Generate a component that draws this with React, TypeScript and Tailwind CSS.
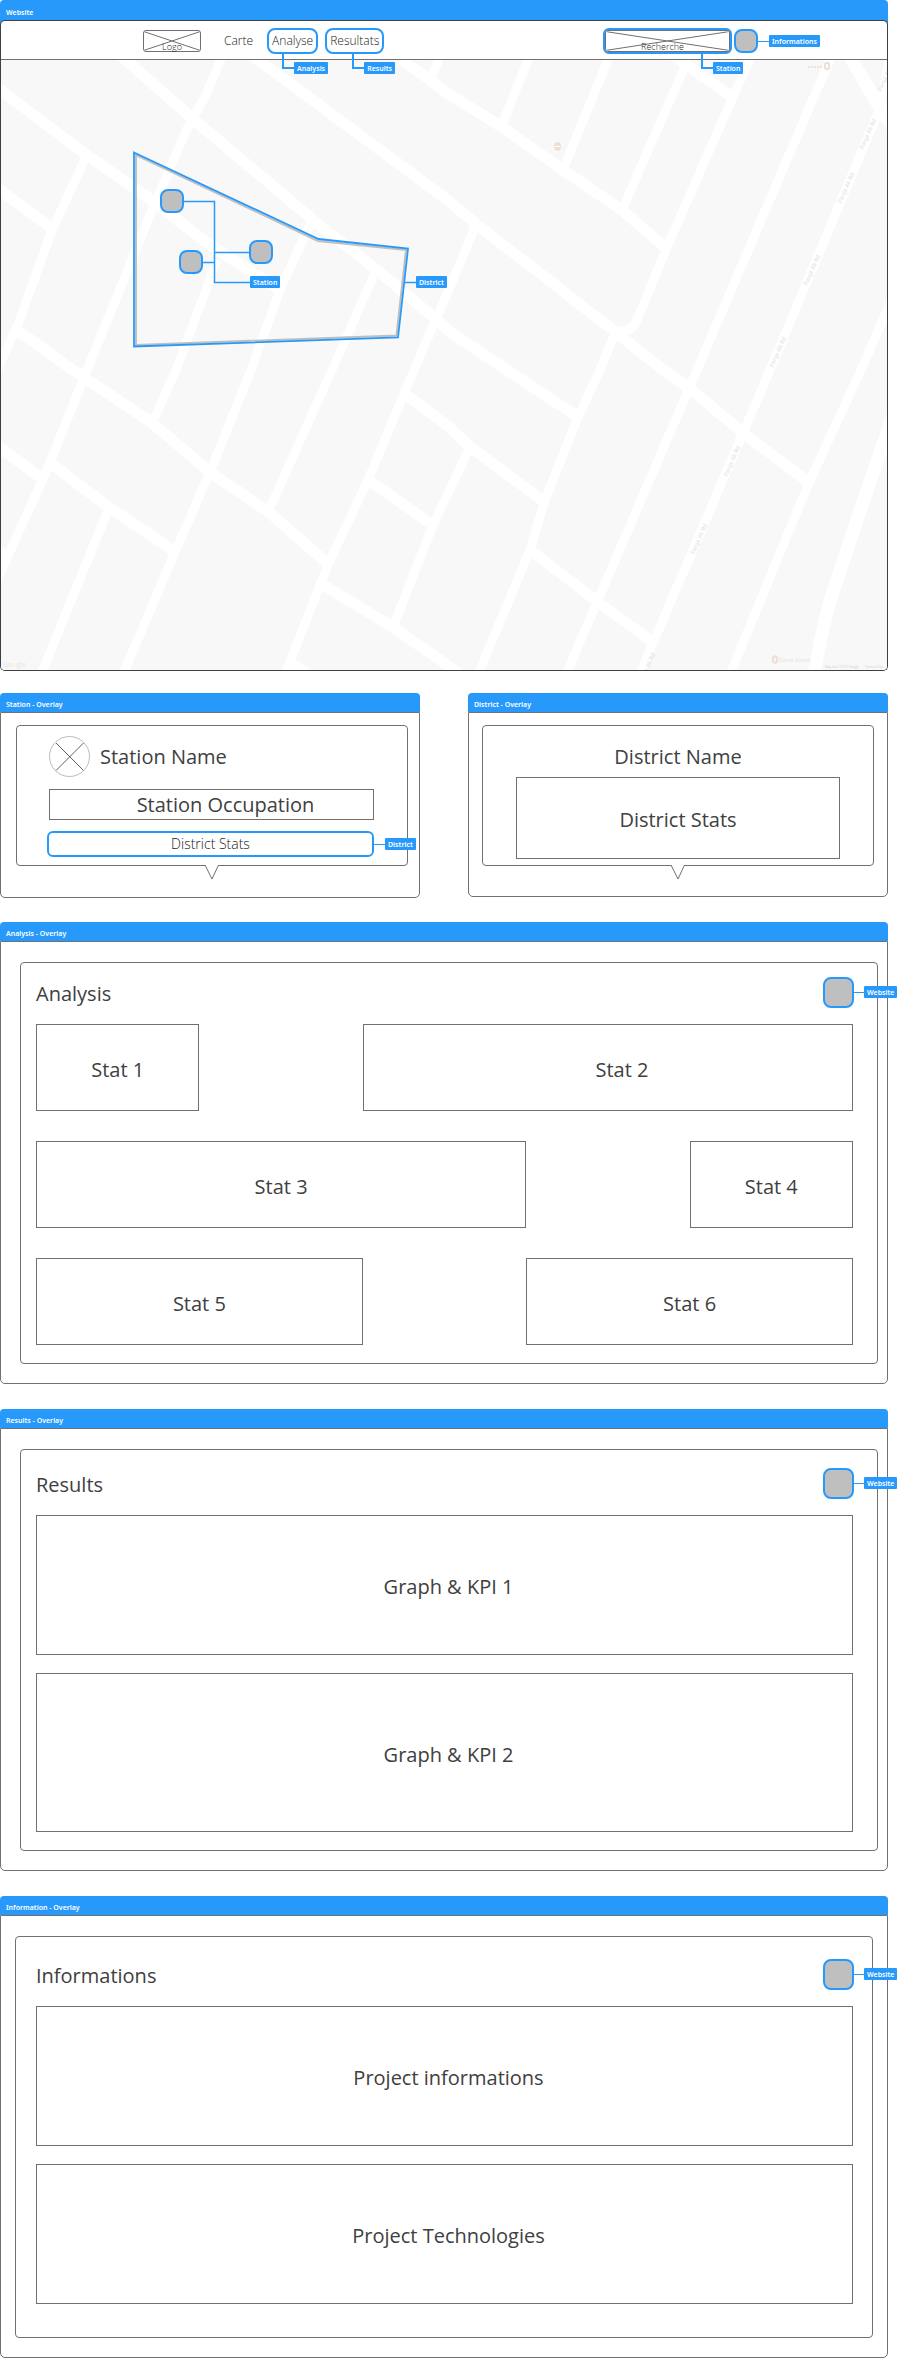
import type { ReactNode } from "react";

const AVENUES: string[] = [
  "M-6 85 L87 155 L147 197 L213 247 L281 291",
  "M112 50 L126 60 L192 118 L313 220 L377 270 L437 320 L450 332 L507 370 L578 417",
  "M244 50 L290 83 L450 202 L475 223 L613 330 L663 370 L688 387 L743 433 L810 483",
  "M388 50 L430 80 L450 95 L502 127 L563 170 L622 210 L666 248",
  "M666 50 L683 62 L733 98",
  "M-6 186 L52 228",
  "M17 330 L70 368 L152 423 L210 472 L270 513 L327 563",
  "M323 585 L393 627 L450 667 L460 674",
  "M-6 443 L40 477",
  "M53 465 L110 508 L176 552",
  "M407 395 L450 428 L470 447 L545 502",
  "M370 481 L434 526",
  "M530 550 L598 602 L654 643",
  "M288 661 L312 677",
  "M-4 549 L5 556",
];

const STREETS: string[] = [
  "M225 50 L205 97 L190 122 L155 203 L87 370 L47 470 L-4 582",
  "M86 157 L52 230 L17 327 L-4 372",
  "M217 260 L176 370 L152 423",
  "M311 222 L280 290 L251 370 L210 472 L175 552 L124 672",
  "M375 273 L332 370 L268 512",
  "M475 227 L450 287 L414 370 L368 480 L327 567 L286 672",
  "M532 50 L502 125",
  "M443 50 L430 80",
  "M612 50 L563 170",
  "M686 64 L622 210",
  "M754 50 L733 97 L667 247 L637 320 Q633 332 618 332 L612 340 L600 370 L578 417 L545 500 L530 550 L479 672",
  "M834 50 L697 370 L598 600 L567 672",
  "M891 50 L880 108 L770 370 L743 433 L653 643 L641 672",
  "M896 290 L861 370 L808 485 L731 672",
  "M109 508 L42 672",
  "M470 447 L433 525 L393 627",
];

const WIDE_ROADS: string[] = [
  "M846 50 L880 108 L898 134",
  "M893 416 L862 505 L833 592 Q827 606 814 674",
];

const STREET_LABELS: [number, number][] = [
  [868, 134],
  [846, 188],
  [812, 270],
  [778, 352],
  [886, 76],
  [732, 461],
  [699, 539],
  [647, 668],
];

function Tag({ children }: { children: ReactNode }) {
  return (
    <span className="flex h-3 items-center rounded-[1px] bg-[#2699fb] px-[3px] font-['Noto_Sans','Open_Sans',sans-serif] text-[7px] leading-none font-semibold whitespace-nowrap text-white">
      {children}
    </span>
  );
}

/* Elbow connector that hangs below a navigation item. */
function DropLink({ children }: { children: ReactNode }) {
  return (
    <span className="flex">
      <span className="h-[15px] w-3 border-b-2 border-l-2 border-[#2699fb]" />
      <span className="mt-2">
        <Tag>{children}</Tag>
      </span>
    </span>
  );
}

function SideLink({ children }: { children: ReactNode }) {
  return (
    <span className="flex items-center">
      <span className="h-px w-[11px] bg-[#2699fb]" />
      <Tag>{children}</Tag>
    </span>
  );
}

function Cross() {
  return (
    <svg
      className="pointer-events-none absolute inset-0 h-full w-full"
      viewBox="0 0 100 100"
      preserveAspectRatio="none"
      aria-hidden="true"
    >
      <path
        d="M1 4 L99 96 M1 96 L99 4"
        stroke="#707070"
        strokeWidth="1"
        vectorEffect="non-scaling-stroke"
      />
    </svg>
  );
}

function Frame({
  title,
  children,
  className = "",
}: {
  title: string;
  children: ReactNode;
  className?: string;
}) {
  return (
    <section className={`flex flex-col ${className}`}>
      <h2 className="flex h-[19px] items-center rounded-t-[4px] bg-[#2699fb] px-[6px] pt-1 font-['Noto_Sans','Open_Sans',sans-serif] text-[7px] leading-none font-semibold text-white">
        {title}
      </h2>
      <div className="flex-1 rounded-b-[5px] border border-[#707070]">
        {children}
      </div>
    </section>
  );
}

function Box({
  children,
  className,
}: {
  children: ReactNode;
  className: string;
}) {
  return (
    <div
      className={`flex items-center justify-center border border-[#707070] pt-1 text-xl leading-6 ${className}`}
    >
      {children}
    </div>
  );
}

function CardTitle({ children }: { children: string }) {
  return (
    <div className="flex items-center justify-between">
      <h3 className="pt-[2px] text-xl leading-6">{children}</h3>
      <div className="relative">
        <button
          type="button"
          aria-label={`Close ${children}`}
          className="-mr-px block size-[31px] rounded-lg border-2 border-[#2699fb] bg-[#bfbfbf]"
        />
        <span className="absolute top-[9px] left-full">
          <SideLink>Website</SideLink>
        </span>
      </div>
    </div>
  );
}

function Pointer() {
  return (
    <svg
      className="absolute top-full left-1/2 -ml-2 h-[15px] w-4"
      viewBox="0 0 16 15"
      aria-hidden="true"
    >
      <path d="M0.5 -1 L8 14 L15 -1" fill="#fff" stroke="#707070" />
      <path d="M1 -1 H14.6 V0 H1 Z" fill="#fff" />
    </svg>
  );
}

function Pin({ className, label }: { className: string; label: string }) {
  return (
    <button
      type="button"
      aria-label={label}
      className={`absolute size-6 rounded-lg border-2 border-[#2699fb] bg-[#bfbfbf] ${className}`}
    />
  );
}

function CityMap() {
  return (
    <div className="relative overflow-hidden rounded-b-[4px]">
      <svg
        className="block h-[610px] w-full"
        viewBox="1 60 886 610"
        preserveAspectRatio="xMinYMin slice"
        role="img"
        aria-label="Carte"
      >
        <rect x="0" y="50" width="900" height="630" fill="#f8f8f8" />
        <g fill="none" stroke="#fff" strokeWidth="11">
          {AVENUES.map((d) => (
            <path key={d} d={d} />
          ))}
        </g>
        <g fill="none" stroke="#fff" strokeWidth="9">
          {STREETS.map((d) => (
            <path key={d} d={d} />
          ))}
        </g>
        <g fill="none" stroke="#fff" strokeWidth="13">
          {WIDE_ROADS.map((d) => (
            <path key={d} d={d} />
          ))}
        </g>
        <g fill="#dedede" fontSize="6" textAnchor="middle">
          {STREET_LABELS.map(([x, y]) => (
            <text key={x} x={x} y={y} dy="2" transform={`rotate(-66 ${x} ${y})`}>
              Panja Ali Rd
            </text>
          ))}
        </g>
        <g fill="none" stroke="#ecdfd8" strokeWidth="2">
          <ellipse cx="827" cy="66" rx="2.2" ry="3.2" />
          <ellipse cx="775" cy="659.5" rx="2.2" ry="3.2" />
        </g>
        <ellipse cx="557.5" cy="146.5" rx="3.4" ry="4.4" fill="#ecdfd8" />
        <path d="M555 146.500 h5" stroke="#fff" />
        <path d="M808 67 h15" stroke="#e9e2de" strokeWidth="2" strokeDasharray="2 1" />
        <text x="779" y="662" fontSize="5" fill="#eae0da">
          Dance School
        </text>
        <text x="825" y="668" fontSize="3" fill="#cfcfcf">
          Map data ©2017 Google
        </text>
        <text x="865" y="668" fontSize="3" fill="#cfcfcf">
          Terms of Use
        </text>
        <text x="3" y="667" fontSize="7">
          <tspan fill="#d9e6fb">G</tspan>
          <tspan fill="#fbdcd9">o</tspan>
          <tspan fill="#fdf0cf">o</tspan>
          <tspan fill="#d9e6fb">g</tspan>
          <tspan fill="#d8f0df">l</tspan>
          <tspan fill="#fbdcd9">e</tspan>
        </text>
        <path
          d="M136 155 L318 241 L406 250 L396.500 335.500 L136 345 Z"
          fill="none"
          stroke="#bfbfbf"
          strokeWidth="2"
        />
        <path
          d="M134 152.500 L318.500 239 L408 248.500 L398 337.500 L134 346.500 Z"
          fill="none"
          stroke="#2699fb"
          strokeWidth="1.800"
        />
        <path
          d="M184 201.500 H214.500 V282.500 H250 M203 262.500 H214.500 M214.500 252.500 H249 M405 282.500 H416"
          fill="none"
          stroke="#2699fb"
          strokeWidth="1.500"
        />
      </svg>
      <Pin className="top-[129px] left-[159px]" label="Station 1" />
      <Pin className="top-[180px] left-[248px]" label="Station 2" />
      <Pin className="top-[190px] left-[178px]" label="Station 3" />
      <span className="absolute top-[216px] left-[249px]">
        <Tag>Station</Tag>
      </span>
      <span className="absolute top-[216px] left-[415px]">
        <Tag>District</Tag>
      </span>
    </div>
  );
}

function Website() {
  return (
    <section>
      <div className="rounded-t-[4px] bg-[#2699fb]">
        <h1 className="flex h-5 items-center px-[6px] pt-1 font-['Noto_Sans','Open_Sans',sans-serif] text-[7px] leading-none font-semibold text-white">
          Website
        </h1>
        <div className="rounded-t-[5px] border border-b-0 border-[#404040] bg-white">
          <header className="flex h-[39px] items-center border-b border-[#707070] pt-[2px] pr-[129px] pl-[142px] text-[#202020]">
            <div className="relative h-[22px] w-[58px] rounded-[3px] border border-[#707070] pt-[11px] text-center text-[9px] leading-[10px] font-light">
              <Cross />
              <span className="relative">Logo</span>
            </div>
            <nav className="ml-4 flex items-center gap-[7px] text-xs font-light">
              <a href="#carte" className="px-[7px] leading-4">
                Carte
              </a>
              <div className="relative">
                <a
                  href="#analysis"
                  className="flex h-[26px] items-center rounded-lg border-2 border-[#2699fb] px-[3px]"
                >
                  Analyse
                </a>
                <span className="absolute top-full left-[15px] z-10">
                  <DropLink>Analysis</DropLink>
                </span>
              </div>
              <div className="relative">
                <a
                  href="#results"
                  className="flex h-[26px] items-center rounded-lg border-2 border-[#2699fb] px-[3px]"
                >
                  Resultats
                </a>
                <span className="absolute top-full left-[27px] z-10">
                  <DropLink>Results</DropLink>
                </span>
              </div>
            </nav>
            <div className="ml-auto flex items-center gap-[2px]">
              <div className="relative rounded-md border-2 border-[#2699fb]">
                <div className="relative h-[22px] w-[125px] rounded-[3px] border border-[#707070]">
                  <Cross />
                  <input
                    type="search"
                    aria-label="Recherche"
                    placeholder="Recherche"
                    className="relative block h-full w-full bg-transparent pt-[10px] text-center text-[9px] leading-[10px] font-light outline-none placeholder:text-[#202020]"
                  />
                </div>
                <span className="absolute top-full left-24 z-10 mt-[2px]">
                  <DropLink>Station</DropLink>
                </span>
              </div>
              <div className="relative">
                <button
                  type="button"
                  aria-label="Informations"
                  className="block size-6 rounded-lg border-2 border-[#2699fb] bg-[#bfbfbf]"
                />
                <span className="absolute top-[6px] left-full">
                  <SideLink>Informations</SideLink>
                </span>
              </div>
            </div>
          </header>
        </div>
      </div>
      <div className="rounded-b-[5px] border border-t-0 border-[#404040]">
        <CityMap />
      </div>
    </section>
  );
}

export default function App() {
  return (
    <main className="bg-white pr-3 font-['Open_Sans','Noto_Sans',sans-serif] text-[#404040]">
      <Website />

      <div className="mt-[22px] grid grid-cols-2 gap-12">
        <Frame title="Station - Overlay" className="h-[205px]">
          <div className="relative mt-3 mr-[11px] ml-[15px] h-[141px] rounded-[4px] border border-[#707070] pr-[33px] pl-8">
            <div className="flex items-center gap-[10px] pt-[10px]">
              <svg className="size-[41px]" viewBox="0 0 41 41" fill="none" aria-hidden="true">
                <circle cx="20.5" cy="20.5" r="20" stroke="#bbb" />
                <path d="M7 7 L34.500 34.500 M34.500 7 L7 34.500" stroke="#606060" />
              </svg>
              <h3 className="text-xl leading-6">Station Name</h3>
            </div>
            <Box className="mt-3 h-[31px] pb-1 pl-7">Station Occupation</Box>
            <div className="relative mt-[11px] -ml-[2px]">
              <button
                type="button"
                className="flex h-[26px] w-full items-center justify-center rounded-md border-2 border-[#2699fb] text-sm font-light text-[#202020]"
              >
                District Stats
              </button>
              <span className="absolute top-[7px] left-full z-10">
                <SideLink>District</SideLink>
              </span>
            </div>
            <Pointer />
          </div>
        </Frame>

        <Frame title="District - Overlay" className="h-[204px]">
          <div className="relative mx-[13px] mt-3 h-[141px] rounded-[4px] border border-[#707070] px-[33px]">
            <h3 className="pt-[19px] text-center text-xl leading-6">District Name</h3>
            <Box className="mt-2 h-[82px]">District Stats</Box>
            <Pointer />
          </div>
        </Frame>
      </div>

      <Frame title="Analysis - Overlay" className="mt-6">
        <div id="analysis" className="mt-5 mr-[9px] mb-[19px] ml-[19px] rounded-[4px] border border-[#707070] pt-[14px] pr-6 pb-[18px] pl-[15px]">
          <CardTitle>Analysis</CardTitle>
          <div className="mt-4 flex flex-col gap-[30px]">
            <div className="flex justify-between">
              <Box className="h-[87px] w-1/5">Stat 1</Box>
              <Box className="h-[87px] w-3/5 pl-7">Stat 2</Box>
            </div>
            <div className="flex justify-between">
              <Box className="h-[87px] w-3/5">Stat 3</Box>
              <Box className="h-[87px] w-1/5">Stat 4</Box>
            </div>
            <div className="flex justify-between">
              <Box className="h-[87px] w-2/5">Stat 5</Box>
              <Box className="h-[87px] w-2/5">Stat 6</Box>
            </div>
          </div>
        </div>
      </Frame>

      <Frame title="Results - Overlay" className="mt-[25px]">
        <div id="results" className="mt-5 mr-[9px] mb-[19px] ml-[19px] rounded-[4px] border border-[#707070] pt-[18px] pr-6 pb-[18px] pl-[15px]">
          <CardTitle>Results</CardTitle>
          <div className="mt-4 flex flex-col gap-[18px]">
            <Box className="h-[140px] pl-2">Graph &amp; KPI 1</Box>
            <Box className="h-[159px] pl-2">Graph &amp; KPI 2</Box>
          </div>
        </div>
      </Frame>

      <Frame title="Information - Overlay" className="mt-[25px]">
        <div className="mx-[14px] mt-5 mb-[19px] rounded-[4px] border border-[#707070] pt-[22px] pr-[19px] pb-[33px] pl-5">
          <CardTitle>Informations</CardTitle>
          <div className="mt-4 flex flex-col gap-[18px]">
            <Box className="h-[140px] pl-2">Project informations</Box>
            <Box className="h-[140px] pl-2">Project Technologies</Box>
          </div>
        </div>
      </Frame>
    </main>
  );
}
